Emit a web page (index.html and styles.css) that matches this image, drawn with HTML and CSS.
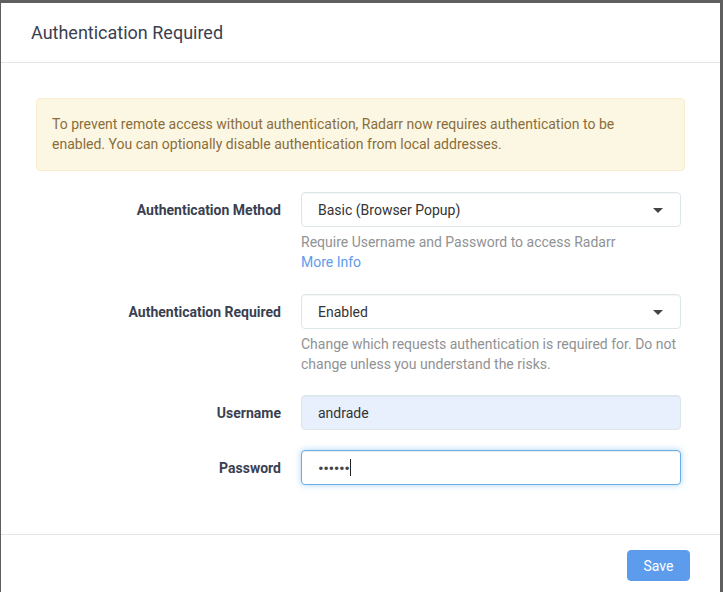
FILE: index.html
```html
<!DOCTYPE html>
<html lang="en">
<head>
<meta charset="utf-8">
<title>Authentication Required</title>
<link rel="stylesheet" href="styles.css">
</head>
<body>
<div class="frame">
  <div class="modal">
    <div class="modal-header">Authentication Required</div>
    <div class="modal-body">
      <div class="alert">To prevent remote access without authentication, Radarr now requires authentication to be enabled. You can optionally disable authentication from local addresses.</div>

      <div class="form-group">
        <div class="label">Authentication Method</div>
        <div class="field">
          <div class="input select">Basic (Browser Popup)<span class="caret"></span></div>
          <div class="help">Require Username and Password to access Radarr<br><a class="link" href="#">More Info</a></div>
        </div>
      </div>

      <div class="form-group">
        <div class="label">Authentication Required</div>
        <div class="field">
          <div class="input select">Enabled<span class="caret"></span></div>
          <div class="help">Change which requests authentication is required for. Do not change unless you understand the risks.</div>
        </div>
      </div>

      <div class="form-group form-group-tight">
        <div class="label">Username</div>
        <div class="field">
          <div class="input autofill">andrade</div>
        </div>
      </div>

      <div class="form-group">
        <div class="label">Password</div>
        <div class="field">
          <div class="input focused"><span class="dots">••••••</span><span class="text-caret"></span></div>
        </div>
      </div>
    </div>
    <div class="modal-footer">
      <button class="btn-save" type="button">Save</button>
    </div>
  </div>
</div>
</body>
</html>
```
FILE: styles.css
```css
html, body {
  margin: 0;
  padding: 0;
  height: 100%;
  overflow: hidden;
}
body {
  background: #5f5f5f;
  font-family: Roboto, "Liberation Sans", Arial, sans-serif;
  font-size: 14px;
  color: #515253;
}
.frame {
  padding: 3px 3px 0 1px;
  height: 100%;
  box-sizing: border-box;
}
.modal {
  background: #fff;
  min-height: 100%;
  display: flex;
  flex-direction: column;
}
.modal > * {
  flex-shrink: 0;
}
.modal-header {
  height: 59px;
  display: flex;
  align-items: center;
  padding: 0 30px;
  font-size: 18px;
  color: #3a3f51;
  border-bottom: 1px solid #e5e5e5;
}
.modal-body {
  padding: 35px 35px 49px;
  border-bottom: 1px solid #e5e5e5;
}
.alert {
  background: #fcf7e3;
  border: 1px solid #faeccc;
  border-radius: 4px;
  color: #8a6d3b;
  padding: 15px 15px 16px;
  line-height: 20px;
  margin-bottom: 21px;
}
.form-group {
  display: grid;
  grid-template-columns: 245px 380px;
  column-gap: 20px;
  margin-bottom: 21px;
}
.form-group-tight {
  margin-bottom: 20px;
}
.form-group:last-child {
  margin-bottom: 0;
}
.label {
  text-align: right;
  font-weight: bold;
  color: #3a3f51;
  height: 35px;
  line-height: 35px;
  padding-top: 1px;
  box-sizing: border-box;
}
.input {
  position: relative;
  height: 35px;
  box-sizing: border-box;
  border: 1px solid #dde6e9;
  border-radius: 4px;
  padding: 0 16px;
  display: flex;
  align-items: center;
  color: #333;
  background: #fff;
  box-shadow: inset 0 1px 1px rgba(0, 0, 0, 0.04);
}
.caret {
  position: absolute;
  right: 17px;
  top: 15px;
  width: 0;
  height: 0;
  border-left: 5px solid transparent;
  border-right: 5px solid transparent;
  border-top: 5px solid #444;
}
.autofill {
  background: #e8f0fe;
}
.focused {
  border-color: #66afe9;
  box-shadow: inset 0 1px 1px rgba(0, 0, 0, 0.075), 0 0 6px rgba(102, 175, 233, 0.55);
}
.dots {
  font-size: 17px;
  letter-spacing: -0.5px;
  color: #444;
}
.text-caret {
  display: inline-block;
  width: 1px;
  height: 17px;
  background: #222;
  margin-left: 1px;
}
.help {
  margin-top: 5px;
  line-height: 20px;
  color: #909293;
}
.link {
  display: inline-block;
  line-height: 21px;
  color: #5d9cec;
  text-decoration: none;
}
.modal-footer {
  display: flex;
  justify-content: flex-end;
  padding: 15px 30px;
}
.btn-save {
  width: 63px;
  height: 31px;
  border: 1px solid #5d9cec;
  border-radius: 4px;
  background: #5d9cec;
  color: #fff;
  font-family: Roboto, "Liberation Sans", Arial, sans-serif;
  font-size: 14px;
  padding: 0;
}
```
